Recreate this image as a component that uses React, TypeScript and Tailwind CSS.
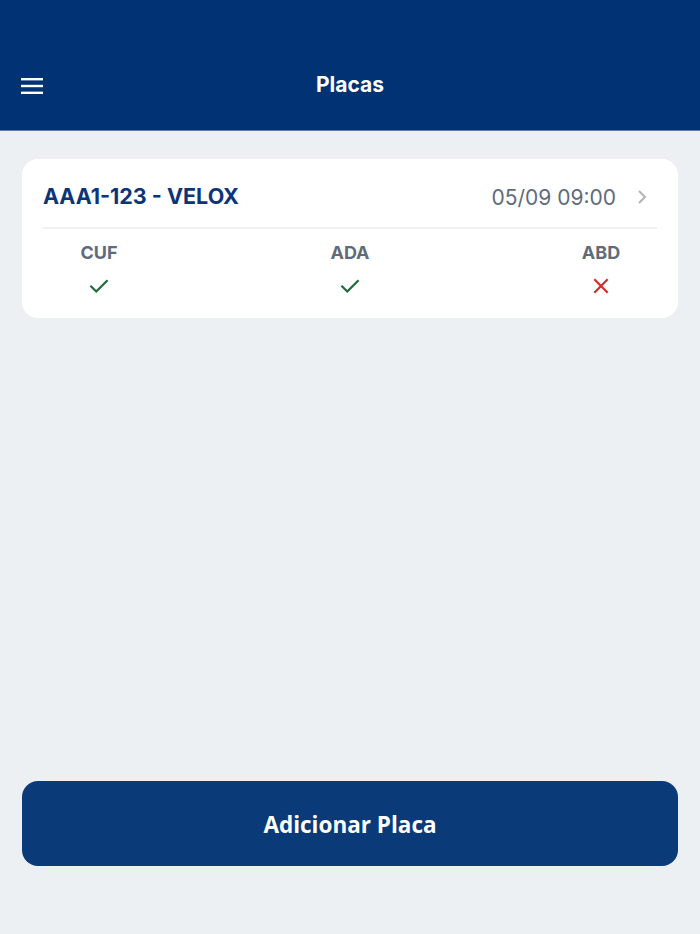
import React from "react";

const Check = () => (
  <svg width="22" height="22" viewBox="0 0 24 24" fill="none" stroke="#1e6b3a" strokeWidth="2.4" strokeLinecap="square">
    <path d="M3.5 12.5l5.5 5.5L20.5 6.5" />
  </svg>
);

const Cross = () => (
  <svg width="20" height="20" viewBox="0 0 24 24" fill="none" stroke="#d42a2a" strokeWidth="2.6">
    <path d="M4 4l16 16M20 4L4 20" />
  </svg>
);

export default function App() {
  const items = [
    { label: "CUF", ok: true },
    { label: "ADA", ok: true },
    { label: "ABD", ok: false },
  ];
  return (
    <div className="w-[700px] h-[934px] bg-[#edf0f3] flex flex-col" style={{ fontFamily: "Inter, 'Liberation Sans', sans-serif" }}>
      <header className="h-[131px] bg-[#003274] flex items-end pb-[34px] px-[20px] relative border-b border-[#5b7db0]">
        <svg width="24" height="18" viewBox="0 0 24 18" className="mb-[1px]">
          <rect x="1" y="1" width="22" height="2.4" fill="white" />
          <rect x="1" y="7.8" width="22" height="2.4" fill="white" />
          <rect x="1" y="14.6" width="22" height="2.4" fill="white" />
        </svg>
        <div className="absolute left-0 right-0 bottom-[33px] text-center text-white font-bold text-[21px] leading-[24px]">Placas</div>
      </header>
      <main className="flex-1 px-[22px] pt-[28px] flex flex-col">
        <div className="bg-white rounded-[16px] px-[21px]">
          <div className="flex items-center justify-between h-[70px] pt-[7px] border-b-2 border-[#eff1f3]">
            <span className="text-[#0b3578] font-bold text-[21.5px]">AAA1-123 - VELOX</span>
            <div className="flex items-center gap-[18px] pr-[9px]">
              <span className="text-[#5f6b7a] text-[21px] mt-[2px] mr-[2px]">05/09 09:00</span>
              <svg width="12" height="16" viewBox="0 0 12 16" fill="none" stroke="#b3b3b3" strokeWidth="2">
                <path d="M3 2l6 6-6 6" />
              </svg>
            </div>
          </div>
          <div className="flex justify-between px-[35px] pt-[13px] pb-[21px]">
            {items.map((it) => (
              <div key={it.label} className="flex flex-col items-center w-[42px]">
                <span className="text-[#5f6b7a] font-bold text-[18px] leading-[22px]">{it.label}</span>
                <div className="h-[22px] mt-[11px] flex items-center justify-center">
                  {it.ok ? <Check /> : <Cross />}
                </div>
              </div>
            ))}
          </div>
        </div>
        <div className="flex-1" />
        <button className="mb-[68px] h-[85px] rounded-[16px] bg-[#0b3a78] text-white font-bold text-[22.5px] pt-[3px]" style={{ fontFamily: "'Open Sans', sans-serif" }}>
          Adicionar Placa
        </button>
      </main>
    </div>
  );
}
